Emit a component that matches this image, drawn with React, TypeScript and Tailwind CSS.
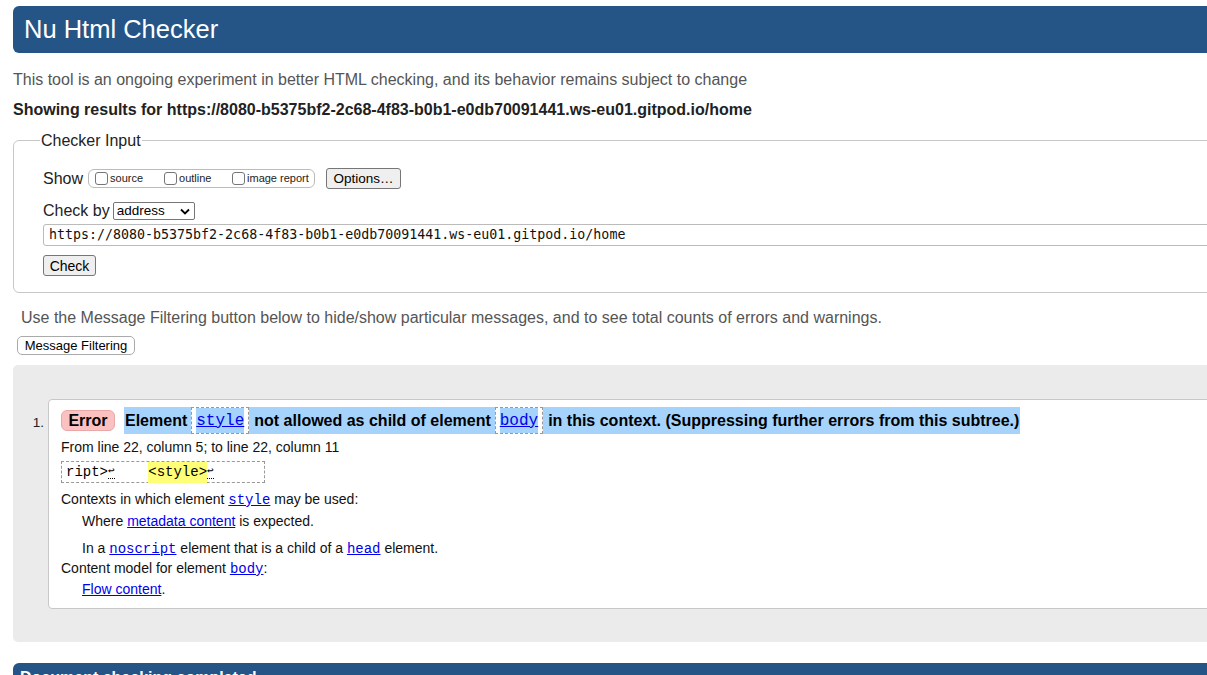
import React from "react";

const sans = { fontFamily: '"Liberation Sans", Arial, sans-serif' };

function Box() {
  return <span className="inline-block w-[13px] h-[13px] rounded-[3px] border border-[#767676] bg-white mr-[2px] shrink-0" />;
}

function Code({ children }: { children: React.ReactNode }) {
  return (
    <span className="inline-flex h-[27px] items-stretch border border-dashed border-[#999] bg-white px-[4px]">
      <span className="flex items-center bg-[#a5d3fb] font-['Liberation_Mono',monospace] font-normal text-[16px] text-[#0000ee] underline">
        {children}
      </span>
    </span>
  );
}

function Hl({ children, cls = "" }: { children: React.ReactNode; cls?: string }) {
  return <span className={"flex items-center h-[27px] bg-[#a5d3fb] " + cls}>{children}</span>;
}

function MonoLink({ children }: { children: React.ReactNode }) {
  return <a className="font-['Liberation_Mono',monospace] text-[14px] text-[#0000ee] underline">{children}</a>;
}

export default function App() {
  return (
    <div className="w-[1207px] h-[675px] overflow-hidden bg-white text-[#222]" style={sans}>
      <div className="w-[1260px] pl-[13px] pt-[6px]">
        <div className="h-[47px] bg-[#255587] rounded-l-[6px] flex items-center pl-[11px]">
          <h1 className="text-white text-[25.5px] leading-none font-normal">Nu Html Checker</h1>
        </div>
        <p className="mt-[18px] text-[16px] leading-[18px] text-[#555]">
          This tool is an ongoing experiment in better HTML checking, and its behavior remains subject to change
        </p>
        <p className="mt-[12px] text-[16px] leading-[18px] font-bold text-[#222]">
          Showing results for https://8080-b5375bf2-2c68-4f83-b0b1-e0db70091441.ws-eu01.gitpod.io/home
        </p>
        <fieldset className="mt-[12px] border border-[#c8c8c8] rounded-l-[6px] pl-[29px] pt-[18px] pb-[16px]">
          <legend className="ml-[-3px] px-[1px] text-[16px] leading-[19px] text-[#222]">Checker Input</legend>
          <div className="flex items-center h-[21px]">
            <span className="text-[16px]">Show</span>
            <span className="ml-[5px] flex items-center h-[19px] w-[227px] border border-[#bbb] rounded-[6px] pl-[6px] text-[11px] text-[#222]">
              <span className="flex items-center w-[69px]"><Box />source</span>
              <span className="flex items-center w-[68px]"><Box />outline</span>
              <span className="flex items-center"><Box />image report</span>
            </span>
            <button className="ml-[11px] h-[21px] w-[75px] bg-[#efefef] border border-[#767676] rounded-[3px] text-[13.5px] text-black">
              Options…
            </button>
          </div>
          <div className="mt-[12px] flex items-center h-[20px]">
            <span className="text-[16px]">Check by</span>
            <span className="ml-[3px] flex items-center justify-between h-[18px] w-[82px] border border-[#767676] rounded-[2px] pl-[3px] pr-[4px] text-[13.5px] text-black">
              address
              <svg width="10" height="7" viewBox="0 0 10 7"><path d="M1 1.5 L5 5.5 L9 1.5" fill="none" stroke="#000" strokeWidth="1.8" /></svg>
            </span>
          </div>
          <div className="mt-[3px] h-[22px] border border-[#bbb] rounded-l-[3px] flex items-center pl-[5px] font-['DejaVu_Sans_Mono',monospace] text-[13.3px] text-[#111]">
            https://8080-b5375bf2-2c68-4f83-b0b1-e0db70091441.ws-eu01.gitpod.io/home
          </div>
          <button className="mt-[9px] h-[21px] w-[53px] bg-[#efefef] border border-[#767676] rounded-[3px] text-[14px] text-black block">
            Check
          </button>
        </fieldset>
        <p className="mt-[16px] ml-[8px] text-[16px] leading-[18px] text-[#555]">
          Use the Message Filtering button below to hide/show particular messages, and to see total counts of errors and warnings.
        </p>
        <button className="mt-[9px] ml-[4px] h-[19px] w-[118px] bg-white border border-[#aaa] rounded-[5px] text-[13px] text-black block leading-none">
          Message Filtering
        </button>
        <div className="mt-[10px] bg-[#ebebeb] rounded-l-[5px] pt-[34px] pb-[33px] pl-[35px] flex">
          <span className="w-0 relative">
            <span className="absolute right-[4px] top-[14px] text-[13.5px] text-[#222]">1.</span>
          </span>
          <div className="flex-1 bg-white border border-[#c8c8c8] rounded-l-[4px] pl-[12px] pt-[7px] pb-[11px] text-[14px] text-[#111]">
            <div className="flex items-center h-[27px] text-[16px] font-bold text-black whitespace-pre">
              <span className="h-[21px] w-[54px] flex items-center justify-center bg-[#fbc1c1] border border-[#e8a8a8] rounded-[6px]">Error</span>
              <Hl cls="ml-[9px] pl-[1px] pr-[4px]">Element</Hl>
              <Code>style</Code>
              <Hl cls="pl-[5px] pr-[4px]">not allowed as child of element</Hl>
              <Code>body</Code>
              <Hl cls="pl-[5px] pr-[1px]">in this context. (Suppressing further errors from this subtree.)</Hl>
            </div>
            <div className="mt-[5px] leading-[16px]">From line 22, column 5; to line 22, column 11</div>
            <div className="mt-[6px] h-[22px] w-[204px] border border-dashed border-[#999] flex items-center pl-[4px] font-['Liberation_Mono',monospace] text-[14px] text-black whitespace-pre">
              <span>ript&gt;</span>
              <span className="border-b border-dotted border-black leading-[13px] text-[11px]">↩</span>
              <span>    </span>
              <span className="bg-[#ffff77]">&lt;style&gt;</span>
              <span className="border-b border-dotted border-black leading-[13px] text-[11px]">↩</span>
            </div>
            <div className="mt-[8px] leading-[16px]">
              Contexts in which element <MonoLink>style</MonoLink> may be used:
            </div>
            <div className="mt-[5px] ml-[21px] leading-[16px]">
              Where <a className="text-[#0000ee] underline">metadata content</a> is expected.
            </div>
            <div className="mt-[11px] ml-[21px] leading-[16px]">
              In a <MonoLink>noscript</MonoLink> element that is a child of a <MonoLink>head</MonoLink> element.
            </div>
            <div className="mt-[3px] leading-[16px]">
              Content model for element <MonoLink>body</MonoLink>:
            </div>
            <div className="mt-[4px] ml-[21px] leading-[16px]">
              <a className="text-[#0000ee] underline">Flow content</a>.
            </div>
          </div>
        </div>
        <div className="mt-[21px] h-[40px] bg-[#255587] rounded-l-[6px] pl-[7px] pt-[6px]">
          <div className="text-white font-bold text-[16px] leading-[18px]">Document checking completed.</div>
        </div>
      </div>
    </div>
  );
}
